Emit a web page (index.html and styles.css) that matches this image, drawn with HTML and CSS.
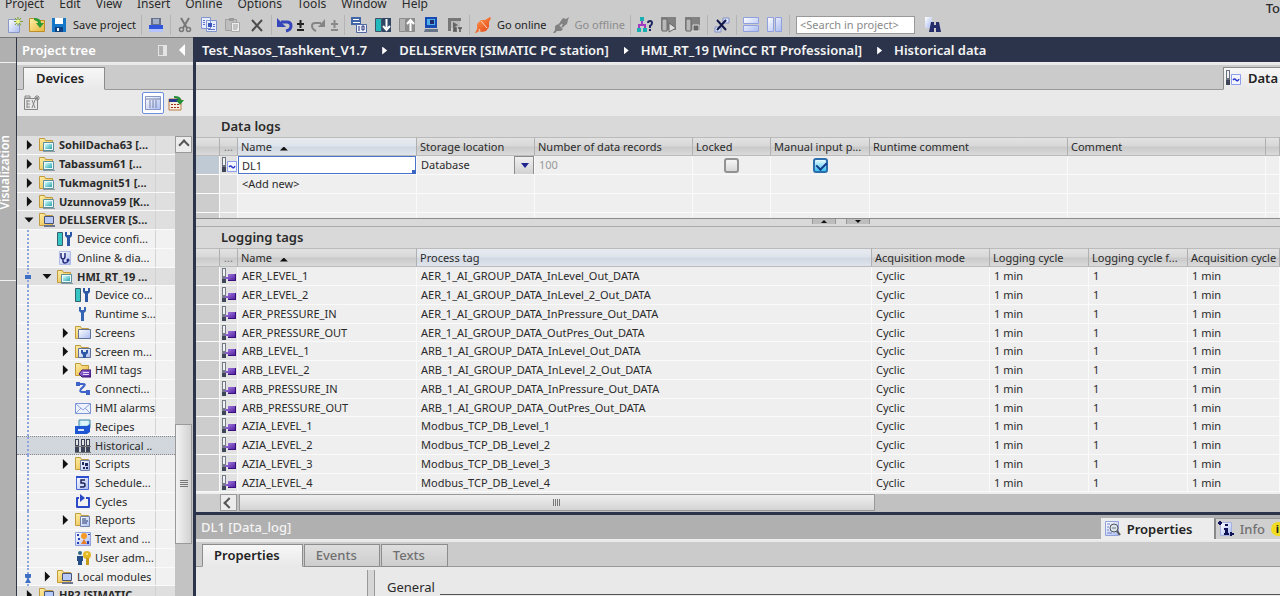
FILE: index.html
```
<!doctype html>
<html lang="en">
    <head>
        <meta charset="UTF-8" />
        <meta name="viewport" content="width=device-width, initial-scale=1.0" />
        <title>Historical data</title>
        <link rel="stylesheet" href="styles.css">
    </head>
    <body>
        <!-- icon sprite -->
        <svg class="sprite" aria-hidden="true">
            <defs>
                <linearGradient id="g-folder" x1="0" y1="0" x2="1" y2="1"><stop offset="0" stop-color="#fff0a8" /><stop offset="1" stop-color="#e8b53c" /></linearGradient>
                <linearGradient id="g-blue" x1="0" y1="0" x2="1" y2="1"><stop offset="0" stop-color="#fff" /><stop offset="1" stop-color="#a9baf0" /></linearGradient>
                <linearGradient id="g-teal" x1="0" y1="0" x2="1" y2="1"><stop offset="0" stop-color="#d4ffff" /><stop offset="1" stop-color="#2aa3ad" /></linearGradient>
                <linearGradient id="g-violet" x1="0" y1="0" x2="1" y2="1"><stop offset="0" stop-color="#a884e6" /><stop offset="1" stop-color="#4a1699" /></linearGradient>
                <linearGradient id="g-plug" x1="0" y1="0" x2="1" y2="1"><stop offset="0" stop-color="#ffa050" /><stop offset="1" stop-color="#e23d12" /></linearGradient>
            </defs>
            <symbol id="folder" viewBox="0 0 16 16"><path d="M.500 13.500v-12h5l1 2h7v10z" fill="url(#g-folder)" stroke="#c19a3d" /></symbol>
            <symbol id="station" viewBox="0 0 16 16"><use href="#folder" /><path d="M4.500 5.500h10v8h-10z" fill="#eef8f8" stroke="#5b8f9b" /><path d="M6 7h7v5H6z" fill="url(#g-teal)" /><path d="M4 14h12v1H4z" fill="#8b99a0" /></symbol>
            <symbol id="pc" viewBox="0 0 16 16"><use href="#folder" /><path d="M5.500 4.500h9v7h-9z" fill="#b6c8f5" stroke="#4a5578" /><path d="M5 13h11v2H5z" fill="#6c7690" /></symbol>
            <symbol id="config" viewBox="0 0 16 16"><path d="M.500 1.500h5v13h-5z" fill="#35c5c3" stroke="#35606e" /><path d="M8 1v4l2 2v8h3V7l2-2V1h-2v3h-3V1z" fill="#2c57a5" /></symbol>
            <symbol id="wrench" viewBox="0 0 16 16"><path d="M4 1v4l2 2v8h3V7l2-2V1H9v3H6V1z" fill="#3564b5" /></symbol>
            <symbol id="diag" viewBox="0 0 16 16"><path d="M2.500 1.500h11v13h-11z" fill="url(#g-blue)" stroke="#aebbe9" /><path d="M4 3v3q0 3 2 3t2-3V3M6 9v2q0 2 2 2t3-2" fill="none" stroke="#252a7c" stroke-width="1.500" /><circle cx="11" cy="10" r="1.500" fill="#252a7c" /></symbol>
            <symbol id="screens" viewBox="0 0 16 16"><use href="#folder" /><path d="M3.500 4.500h12v9h-12z" fill="url(#g-blue)" stroke="#607197" /></symbol>
            <symbol id="screenmgmt" viewBox="0 0 16 16"><use href="#screens" /><path d="M6 6v3l2 2v3h3v-3l2-2V6h-2v2H8V6z" fill="#2c57a5" /></symbol>
            <symbol id="tags" viewBox="0 0 16 16"><use href="#folder" /><path d="M4 12l3-4h9v7H7z" fill="url(#g-violet)" stroke="#3c1574" /><path d="M8 10.500h6M8 12.500h6" stroke="#e8dcff" /></symbol>
            <symbol id="connect" viewBox="0 0 16 16"><path d="M3 3h5q3 0 1 2L6 8q-2 3 1 3h5" fill="none" stroke="#3d63c9" stroke-width="2" /><path d="M1 1h4v4H1zM11 9h4v5h-4z" fill="#3d63c9" /></symbol>
            <symbol id="mail" viewBox="0 0 16 16"><path d="M.500 3.500h15v10H.500z" fill="#eef2ff" stroke="#7d94d6" /><path d="M1 4l7 6 7-6M1 13l5-5M15 13l-5-5" fill="none" stroke="#8ea3df" /></symbol>
            <symbol id="recipes" viewBox="0 0 16 16"><path d="M4 1h11v8H4z" fill="#bfe8f2" stroke="#3f86aa" /><path d="M6 3h7M6 5h7" stroke="#fff" /><path d="M0 7h12l3-2v8l-3 2H0z" fill="#1d55d2" /><path d="M3 10h6v2H3z" fill="#d5e3ff" /></symbol>
            <symbol id="history" viewBox="0 0 16 16"><path d="M0 1h4v13H0zM6 1h4v13H6zM11 1h4v13h-4z" fill="#3c4457" /><path d="M1 2h2v5H1zM7 2h2v5H7zM12 2h2v5h-2z" fill="#e4e4e4" /><path d="M0 14h16v1H0zM0 8h16v1H0z" fill="#777" /></symbol>
            <symbol id="scripts" viewBox="0 0 16 16"><use href="#folder" /><path d="M5.500 4.500h9v10h-9z" fill="url(#g-blue)" stroke="#7183ab" /><path d="M7 6h2v3H7zM10 7h3v3h-3zM8 11h2v2H8zM11 11h2v2h-2z" fill="#20295e" /></symbol>
            <symbol id="schedule" viewBox="0 0 16 16"><path d="M1.500 1.500h12v13h-12z" fill="url(#g-blue)" stroke="#4967d2" /><path d="M1 1h13v2H1z" fill="#2b51d1" /><path d="M10 5H6v3h2q2 0 2 2t-2 2H5" fill="none" stroke="#1c225c" stroke-width="1.500" /></symbol>
            <symbol id="cycles" viewBox="0 0 16 16"><path d="M4 4H2v9h12V4h-3" fill="none" stroke="#2b49c7" stroke-width="2" stroke-linejoin="round" /><path d="M5 0l5 4-5 4z" fill="#2b49c7" /></symbol>
            <symbol id="reports" viewBox="0 0 16 16"><use href="#folder" /><path d="M5.500 4.500h9v10h-9z" fill="url(#g-blue)" stroke="#7183ab" /><path d="M7 7h4M7 9h6M7 11h5" stroke="#24366e" /></symbol>
            <symbol id="texts" viewBox="0 0 16 16"><path d="M.500 1.500h15v13H.500z" fill="url(#g-blue)" stroke="#8fa0dc" /><path d="M2 3h2v2H2zM3 7h2v2H3zM2 11h2v2H2zM13 3h2v1h-2z" fill="#2440b5" /><circle cx="9" cy="5" r="3" fill="#f59b25" /><path d="M6 13l3-5 3 5z" fill="#e97b27" /><path d="M12 10h2v3h-2z" fill="#2440b5" /></symbol>
            <symbol id="users" viewBox="0 0 16 16"><circle cx="5" cy="3" r="2" fill="#2e6a87" /><path d="M2 6h6v5H7v4H3v-4H2z" fill="#244d87" /><circle cx="12" cy="5" r="4" fill="#e2b826" /><circle cx="12" cy="4" r="1" fill="#fff2a0" /><path d="M11 8h3v7h-3z" fill="#c79b18" /></symbol>
            <symbol id="taglog" viewBox="0 0 16 16"><path d="M1 0h4v15H1z" fill="#747a88" /><path d="M2 1h2v7H2z" fill="#f1f1f1" /><path d="M1 11h4v4H1z" fill="#3d4557" /><path d="M4 9h3V6h8v7H7v-2H4z" fill="url(#g-violet)" /><path d="M7 12.500h8M14.500 6v7" stroke="#37107c" /></symbol>
            <symbol id="datalog" viewBox="0 0 16 16"><path d="M1 0h4v15H1z" fill="#6a7180" /><path d="M2 1h2v7H2z" fill="#f1f1f1" /><path d="M1 10h4v5H1z" fill="#3d4557" /><path d="M6.500 4.500h9v10h-9z" fill="#f4f6ff" stroke="#8f9eea" /><path d="M8 10q1.500-2 3 0t3-1" fill="none" stroke="#2d3acb" stroke-width="1.500" /></symbol>
            <symbol id="new" viewBox="0 0 16 16"><path d="M1.500 2.500h11v13h-11z" fill="url(#g-blue)" stroke="#8998c9" /><path d="M11 0v9M7 4.500h9M8 1l6 7M14 1L8 8" stroke="#7da42a" /><circle cx="11" cy="4.500" r="2" fill="#eef58c" /></symbol>
            <symbol id="open" viewBox="0 0 16 16"><path d="M.500 14.500v-13h5l1 2h9v11z" fill="url(#g-folder)" stroke="#bd8d28" /><path d="M5 1q7 0 7 5h3l-4 5-4-5h2q0-2-4-3z" fill="#2b9a36" /></symbol>
            <symbol id="save" viewBox="0 0 16 16"><path d="M1 1h14v14H1z" fill="#1677c8" /><path d="M4 1h8v6H4z" fill="#fff" /><path d="M4 10h8v5H4z" fill="#0d3f81" /><path d="M6 11h2v3H6z" fill="#fff" /></symbol>
            <symbol id="print" viewBox="0 0 16 16"><path d="M3 1h10v8H3z" fill="#66718b" /><path d="M5 2h6v5H5z" fill="#a4afca" /><path d="M1 8h14v5H1z" fill="#3156dc" /><path d="M1 12h14v3H1z" fill="#b5c4ff" /></symbol>
            <symbol id="cut" viewBox="0 0 16 16"><path d="M4 1l6 10M12 1L6 11" stroke="#777" stroke-width="2" /><circle cx="4.500" cy="12.500" r="2" fill="none" stroke="#777" stroke-width="1.500" /><circle cx="11.500" cy="12.500" r="2" fill="none" stroke="#777" stroke-width="1.500" /></symbol>
            <symbol id="copy" viewBox="0 0 16 16"><path d="M.500 .500h9v11h-9zM5.500 3.500h10v11h-10z" fill="#e7ecff" stroke="#8194cf" /><path d="M2 3.500h2M2 5.500h2M2 7.500h2M12 7.500h2M12 9.500h2M7 12.500h7" stroke="#5a72c8" /><path d="M7 6h4v4H7z" fill="#3853b9" /></symbol>
            <symbol id="paste" viewBox="0 0 16 16"><path d="M.500 2.500h11v11h-11z" fill="#bebebe" stroke="#a0a0a0" /><path d="M4 1h5v3H4z" fill="#999" /><path d="M6.500 5.500h8v9h-8z" fill="#ededed" stroke="#aaa" /><path d="M8 8h5M8 10h5M8 12h4" stroke="#999" /></symbol>
            <symbol id="delete" viewBox="0 0 16 16"><path d="M3 3l10 11M13 3L3 14" stroke="#4b4b4b" stroke-width="2" /></symbol>
            <symbol id="undo" viewBox="0 0 28 16"><path d="M4 5h6q4 0 4 4t-5 5" fill="none" stroke="#3546ba" stroke-width="3" /><path d="M0 1v9h9z" fill="#3546ba" /><path d="M20 7h7M23.500 3v8M20 13h7" stroke="#222" stroke-width="2" /></symbol>
            <symbol id="redo" viewBox="0 0 28 16"><path d="M10 6H4Q1 6 1 9t4 5" fill="none" stroke="#858585" stroke-width="2" /><path d="M14 2v8H7z" fill="#858585" /><path d="M20 7h7M23.500 3v8M20 13h7" stroke="#888" stroke-width="2" /></symbol>
            <symbol id="compile" viewBox="0 0 16 16"><path d="M0 0h10v8H0z" fill="#4166a8" /><path d="M2 2.500h6M2 5.500h7" stroke="#fff" /><path d="M5.500 7.500h10v8h-10z" fill="#eef1ff" stroke="#5069a5" /><path d="M8 9v5M11 9h2v4h-2z" fill="none" stroke="#222c74" /></symbol>
            <symbol id="download" viewBox="0 0 16 16"><path d="M.500 1.500h6v13h-6z" fill="#22b9bc" stroke="#405265" /><path d="M7 1h9v14H7z" fill="#314664" /><path d="M11.500 2v9M8 9l3.500 4L15 9" fill="none" stroke="#fff" stroke-width="2" /></symbol>
            <symbol id="upload" viewBox="0 0 16 16"><path d="M.500 1.500h6v13h-6z" fill="#b4b4b4" stroke="#8b8b8b" /><path d="M7 1h9v14H7z" fill="#8d8d8d" /><path d="M11.500 14V5M8 7l3.500-4L15 7" fill="none" stroke="#fff" stroke-width="2" /></symbol>
            <symbol id="simulate" viewBox="0 0 16 16"><path d="M2 0h12v11H2z" fill="#174bb3" /><path d="M4 2h8v6H4z" fill="#4fb0ea" /><path d="M7 3h4v4H7z" fill="#202b6c" /><path d="M2 12h13v3H1z" fill="#67758a" /></symbol>
            <symbol id="runtime" viewBox="0 0 16 16"><path d="M1 1h13v3H4v10H1z" fill="#777" /><path d="M4 4h9v7H4z" fill="#bababa" /><path d="M6 5l5 3-5 3z" fill="#666" /><path d="M7 15v-4h2v2H7M9 13v2M11 11h4M13 11v4" fill="none" stroke="#555" stroke-width="1.500" /></symbol>
            <symbol id="plug" viewBox="0 0 16 16"><path d="M0 16l2-4V7l4-4h4l5-3 1 1-2 4v5l-3 4-4 1-3-1-3 2z" fill="url(#g-plug)" /><path d="M6 4l6 7M4 12l1 2" stroke="#ffd9c2" /></symbol>
            <symbol id="plug-off" viewBox="0 0 16 16"><path d="M0 16l2-3V9l3-2 5 5-2 2H4l-2 2zM7 5l3-4 3 1 3-2-1 3-1 4-3 2z" fill="#828282" /><path d="M6 8l3-3M9 10l2-2" stroke="#828282" stroke-width="2" /></symbol>
            <symbol id="nodes" viewBox="0 0 16 16"><path d="M3 0h4v4H3zM0 11h4v4H0zM6 11h4v4H6z" fill="#19afb2" /><path d="M5 4v4M2 11V8h6v3" fill="none" stroke="#a13bc0" stroke-width="2" /><path d="M11 6q0-2 2-2t2 2-2 3v2M13 12v2" fill="none" stroke="#202763" stroke-width="2" /></symbol>
            <symbol id="start" viewBox="0 0 16 16"><path d="M0 0h15v13H0z" fill="#818181" /><path d="M1 2h5v12H1z" fill="#b8b8b8" stroke="#686868" /><path d="M8 6l7 5-7 4z" fill="#ddd" stroke="#666" /></symbol>
            <symbol id="stop" viewBox="0 0 16 16"><path d="M0 0h15v13H0z" fill="#818181" /><path d="M1 2h5v12H1z" fill="#b8b8b8" stroke="#686868" /><path d="M8 8h6v6H8z" fill="#666" stroke="#ddd" /></symbol>
            <symbol id="crossref" viewBox="0 0 16 16"><path d="M9 1h6v5H9zM1 10h6v5H1z" fill="#dbe3ff" stroke="#8291c5" /><path d="M3 3l9 10M12 3L3 13" stroke="#111849" stroke-width="2" /></symbol>
            <symbol id="splith" viewBox="0 0 16 16"><path d="M.500 .500h15v6H.500zM.500 8.500h15v6H.500z" fill="url(#g-blue)" stroke="#90a0df" /></symbol>
            <symbol id="splitv" viewBox="0 0 16 16"><path d="M.500 .500h6v14h-6zM8.500 .500h6v14h-6z" fill="url(#g-blue)" stroke="#90a0df" /></symbol>
            <symbol id="find" viewBox="0 0 16 16"><path d="M0 0h7v11H0z" fill="url(#g-blue)" /><path d="M6 5h3v3h2V5h3l2 10h-5v-4H9v4H4z" fill="#242c6b" /></symbol>
            <symbol id="inspect" viewBox="0 0 16 16"><path d="M.500 .500h13v14H.500z" fill="url(#g-blue)" stroke="#91a2dc" /><path d="M2 3h3M2 6h2M2 9h2M2 12h5" stroke="#7186ca" /><circle cx="9" cy="7" r="4" fill="#dbe5ef" stroke="#555" /><path d="M12 10l3 4" stroke="#555" stroke-width="2" /><path d="M7 7h4" stroke="#777" /></symbol>
            <symbol id="info" viewBox="0 0 16 16"><path d="M2.500 1.500h11v13h-11z" fill="url(#g-blue)" stroke="#a5b1df" /><path d="M0 2h4M2 0v4M12 13h4M13 11v4" stroke="#101457" stroke-width="2" /><path d="M7 3h3v2H7zM6 7h4v5h1v2H6v-2h1V9H6z" fill="#101457" /></symbol>
            <symbol id="overview" viewBox="0 0 16 16"><path d="M.500 1.500h15v13H.500z" fill="url(#g-blue)" stroke="#8796c4" /><path d="M1 4h14M5 5v8M8 5v8M11 5v8" stroke="#7682a8" /></symbol>
            <symbol id="goto" viewBox="0 0 16 16"><path d="M1 4h12v11H1z" fill="#f5efe0" stroke="#bd7b45" /><path d="M1 4h9v3H1z" fill="#273b8d" /><path d="M3 9h2v1H3zM6 9h2v1H6zM9 9h2v1H9zM3 12h2v1H3zM6 12h2v1H6zM9 12h2v1H9z" fill="#a02e22" /><path d="M6 1q7 0 7 4h3l-4 5-4-5h2q0-2-4-2z" fill="#258d38" /></symbol>
            <symbol id="gridadd" viewBox="0 0 16 16"><path d="M.500 3.500h13v11h-13zM1 1h5v2H1zM3 6h3M3 9h3M3 12h3M3 5v8M8 5l3 8M11 5l-3 8" fill="none" stroke="#858585" /><path d="M13 0v6M10 3h6M11 1l4 4M15 1l-4 4" stroke="#858585" /></symbol>
        </svg>

        <header>
            <div class="menubar">
                <nav class="menu" aria-label="Menu">
                    <a href="#">Project</a>
                    <a href="#">Edit</a>
                    <a href="#">View</a>
                    <a href="#">Insert</a>
                    <a href="#">Online</a>
                    <a href="#">Options</a>
                    <a href="#">Tools</a>
                    <a href="#">Window</a>
                    <a href="#">Help</a>
                </nav>
                <span class="brand">To</span>
            </div>
            <div class="toolbar">
                <button class="tool tight" aria-label="New"><svg><use href="#new" /></svg></button>
                <button class="tool tight" aria-label="Open"><svg><use href="#open" /></svg></button>
                <button class="tool labelled"><svg><use href="#save" /></svg>Save project</button>
                <i class="sep"></i>
                <button class="tool" aria-label="Print"><svg><use href="#print" /></svg></button>
                <i class="sep"></i>
                <button class="tool" aria-label="Cut"><svg><use href="#cut" /></svg></button>
                <button class="tool" aria-label="Copy"><svg><use href="#copy" /></svg></button>
                <button class="tool" aria-label="Paste"><svg><use href="#paste" /></svg></button>
                <button class="tool" aria-label="Delete"><svg><use href="#delete" /></svg></button>
                <i class="sep"></i>
                <button class="tool wide" aria-label="Undo"><svg><use href="#undo" /></svg></button>
                <button class="tool wide" aria-label="Redo"><svg><use href="#redo" /></svg></button>
                <i class="sep"></i>
                <button class="tool" aria-label="Compile"><svg><use href="#compile" /></svg></button>
                <button class="tool" aria-label="Download"><svg><use href="#download" /></svg></button>
                <button class="tool" aria-label="Upload"><svg><use href="#upload" /></svg></button>
                <button class="tool" aria-label="Simulate"><svg><use href="#simulate" /></svg></button>
                <button class="tool" aria-label="Start runtime"><svg><use href="#runtime" /></svg></button>
                <i class="sep"></i>
                <button class="tool labelled"><svg><use href="#plug" /></svg>Go online</button>
                <button class="tool labelled offline"><svg><use href="#plug-off" /></svg>Go offline</button>
                <i class="sep"></i>
                <button class="tool" aria-label="Accessible devices"><svg><use href="#nodes" /></svg></button>
                <button class="tool" aria-label="Start CPU"><svg><use href="#start" /></svg></button>
                <button class="tool" aria-label="Stop CPU"><svg><use href="#stop" /></svg></button>
                <i class="sep"></i>
                <button class="tool" aria-label="Cross-references"><svg><use href="#crossref" /></svg></button>
                <i class="sep"></i>
                <button class="tool" aria-label="Split horizontally"><svg><use href="#splith" /></svg></button>
                <button class="tool" aria-label="Split vertically"><svg><use href="#splitv" /></svg></button>
                <i class="sep"></i>
                <input class="search" type="text" placeholder="&lt;Search in project&gt;" aria-label="Search in project" />
                <button class="tool" aria-label="Find"><svg><use href="#find" /></svg></button>
            </div>
        </header>

        <main class="workspace">
            <aside class="rail">
                <div class="rail-head"></div>
                <div class="rail-tab"><span>Visualization</span></div>
            </aside>

            <section class="project">
                <div class="pane-title">
                    <h2>Project tree</h2>
                    <i class="pin"></i>
                    <button class="collapse" aria-label="Collapse"></button>
                </div>
                <div class="tabs">
                    <button class="tab active">Devices</button>
                </div>
                <div class="subbar">
                    <button class="tool" aria-label="Add"><svg><use href="#gridadd" /></svg></button>
                    <button class="tool boxed" aria-label="Overview"><svg><use href="#overview" /></svg></button>
                    <button class="tool" aria-label="Go to"><svg><use href="#goto" /></svg></button>
                </div>
                <div class="tree-wrap">
                    <ul class="tree">
                        <li class="top"><i class="arrow"></i><svg><use href="#station" /></svg><span>SohilDacha63 [...</span></li>
                        <li class="top"><i class="arrow"></i><svg><use href="#station" /></svg><span>Tabassum61 [...</span></li>
                        <li class="top"><i class="arrow"></i><svg><use href="#station" /></svg><span>Tukmagnit51 [...</span></li>
                        <li class="top"><i class="arrow"></i><svg><use href="#station" /></svg><span>Uzunnova59 [K...</span></li>
                        <li class="top"><i class="arrow open"></i><svg><use href="#pc" /></svg><span>DELLSERVER [S...</span></li>
                        <li class="l1"><i class="arrow none"></i><svg><use href="#config" /></svg><span>Device confi...</span></li>
                        <li class="l1"><i class="arrow none"></i><svg><use href="#diag" /></svg><span>Online &amp; dia...</span></li>
                        <li class="l1 top mark"><i class="arrow open"></i><svg><use href="#station" /></svg><span>HMI_RT_19 ...</span></li>
                        <li class="l2"><i class="arrow none"></i><svg><use href="#config" /></svg><span>Device co...</span></li>
                        <li class="l2"><i class="arrow none"></i><svg><use href="#wrench" /></svg><span>Runtime s...</span></li>
                        <li class="l2"><i class="arrow"></i><svg><use href="#screens" /></svg><span>Screens</span></li>
                        <li class="l2"><i class="arrow"></i><svg><use href="#screenmgmt" /></svg><span>Screen m...</span></li>
                        <li class="l2"><i class="arrow"></i><svg><use href="#tags" /></svg><span>HMI tags</span></li>
                        <li class="l2"><i class="arrow none"></i><svg><use href="#connect" /></svg><span>Connecti...</span></li>
                        <li class="l2"><i class="arrow none"></i><svg><use href="#mail" /></svg><span>HMI alarms</span></li>
                        <li class="l2"><i class="arrow none"></i><svg><use href="#recipes" /></svg><span>Recipes</span></li>
                        <li class="l2 selected"><i class="arrow none"></i><svg><use href="#history" /></svg><span>Historical ..</span></li>
                        <li class="l2"><i class="arrow"></i><svg><use href="#scripts" /></svg><span>Scripts</span></li>
                        <li class="l2"><i class="arrow none"></i><svg><use href="#schedule" /></svg><span>Schedule...</span></li>
                        <li class="l2"><i class="arrow none"></i><svg><use href="#cycles" /></svg><span>Cycles</span></li>
                        <li class="l2"><i class="arrow"></i><svg><use href="#reports" /></svg><span>Reports</span></li>
                        <li class="l2"><i class="arrow none"></i><svg><use href="#texts" /></svg><span>Text and ...</span></li>
                        <li class="l2"><i class="arrow none"></i><svg><use href="#users" /></svg><span>User adm...</span></li>
                        <li class="l1 mark end"><i class="arrow"></i><svg><use href="#pc" /></svg><span>Local modules</span></li>
                        <li class="top"><i class="arrow"></i><svg><use href="#pc" /></svg><span>HP2 [SIMATIC</span></li>
                    </ul>
                    <div class="vscroll">
                        <button class="scroll-up" aria-label="Scroll up"></button>
                        <div class="vthumb"></div>
                    </div>
                </div>
            </section>

            <section class="editor">
                <nav class="crumbs" aria-label="Breadcrumb">
                    <a href="#">Test_Nasos_Tashkent_V1.7</a>
                    <a href="#">DELLSERVER [SIMATIC PC station]</a>
                    <a href="#">HMI_RT_19 [WinCC RT Professional]</a>
                    <a href="#">Historical data</a>
                </nav>
                <div class="tabs">
                    <button class="tab active view-tab"><svg><use href="#datalog" /></svg>Data</button>
                </div>
                <div class="subbar"></div>

                <h3>Data logs</h3>
                <div class="grid-pane logs">
                    <table>
                        <colgroup>
                            <col class="c-row"><col class="c-icon"><col class="c-name"><col class="c-mode"><col class="c-records"><col class="c-locked"><col class="c-cycle"><col class="c-comment"><col class="c-comment"><col>
                        </colgroup>
                        <thead>
                            <tr><th></th><th class="dots">...</th><th class="sorted">Name <i class="sort"></i></th><th>Storage location</th><th>Number of data records</th><th>Locked</th><th>Manual input p...</th><th>Runtime comment</th><th>Comment</th><th></th></tr>
                        </thead>
                        <tbody>
                            <tr class="current">
                                <td></td>
                                <td><svg><use href="#datalog" /></svg></td>
                                <td class="editing"><input type="text" value="DL1" aria-label="Name" /></td>
                                <td class="choice"><select aria-label="Storage location"><option>Database</option></select></td>
                                <td class="muted">100</td>
                                <td class="check"><input type="checkbox" aria-label="Locked" /></td>
                                <td class="check"><input type="checkbox" aria-label="Manual input" checked /></td>
                                <td></td><td></td><td></td>
                            </tr>
                            <tr><td></td><td></td><td>&lt;Add new&gt;</td><td></td><td></td><td></td><td></td><td></td><td></td><td></td></tr>
                            <tr><td></td><td></td><td></td><td></td><td></td><td></td><td></td><td></td><td></td><td></td></tr>
                            <tr><td></td><td></td><td></td><td></td><td></td><td></td><td></td><td></td><td></td><td></td></tr>
                        </tbody>
                    </table>
                </div>
                <div class="splitter">
                    <button class="up" aria-label="Expand lower pane"></button>
                    <button class="down" aria-label="Expand upper pane"></button>
                </div>

                <h3>Logging tags</h3>
                <div class="grid-pane tags">
                    <table>
                        <colgroup>
                            <col class="c-row"><col class="c-icon"><col class="c-name"><col class="c-process"><col class="c-mode"><col class="c-cycle"><col class="c-cycle"><col>
                        </colgroup>
                        <thead>
                            <tr><th></th><th class="dots">...</th><th>Name <i class="sort"></i></th><th class="sorted">Process tag</th><th>Acquisition mode</th><th>Logging cycle</th><th>Logging cycle f...</th><th>Acquisition cycle</th></tr>
                        </thead>
                        <tbody>
                            <tr><td></td><td><svg><use href="#taglog" /></svg></td><td>AER_LEVEL_1</td><td>AER_1_AI_GROUP_DATA_InLevel_Out_DATA</td><td>Cyclic</td><td>1 min</td><td>1</td><td>1 min</td></tr>
                            <tr><td></td><td><svg><use href="#taglog" /></svg></td><td>AER_LEVEL_2</td><td>AER_1_AI_GROUP_DATA_InLevel_2_Out_DATA</td><td>Cyclic</td><td>1 min</td><td>1</td><td>1 min</td></tr>
                            <tr><td></td><td><svg><use href="#taglog" /></svg></td><td>AER_PRESSURE_IN</td><td>AER_1_AI_GROUP_DATA_InPressure_Out_DATA</td><td>Cyclic</td><td>1 min</td><td>1</td><td>1 min</td></tr>
                            <tr><td></td><td><svg><use href="#taglog" /></svg></td><td>AER_PRESSURE_OUT</td><td>AER_1_AI_GROUP_DATA_OutPres_Out_DATA</td><td>Cyclic</td><td>1 min</td><td>1</td><td>1 min</td></tr>
                            <tr><td></td><td><svg><use href="#taglog" /></svg></td><td>ARB_LEVEL_1</td><td>ARB_1_AI_GROUP_DATA_InLevel_Out_DATA</td><td>Cyclic</td><td>1 min</td><td>1</td><td>1 min</td></tr>
                            <tr><td></td><td><svg><use href="#taglog" /></svg></td><td>ARB_LEVEL_2</td><td>ARB_1_AI_GROUP_DATA_InLevel_2_Out_DATA</td><td>Cyclic</td><td>1 min</td><td>1</td><td>1 min</td></tr>
                            <tr><td></td><td><svg><use href="#taglog" /></svg></td><td>ARB_PRESSURE_IN</td><td>ARB_1_AI_GROUP_DATA_InPressure_Out_DATA</td><td>Cyclic</td><td>1 min</td><td>1</td><td>1 min</td></tr>
                            <tr><td></td><td><svg><use href="#taglog" /></svg></td><td>ARB_PRESSURE_OUT</td><td>ARB_1_AI_GROUP_DATA_OutPres_Out_DATA</td><td>Cyclic</td><td>1 min</td><td>1</td><td>1 min</td></tr>
                            <tr><td></td><td><svg><use href="#taglog" /></svg></td><td>AZIA_LEVEL_1</td><td>Modbus_TCP_DB_Level_1</td><td>Cyclic</td><td>1 min</td><td>1</td><td>1 min</td></tr>
                            <tr><td></td><td><svg><use href="#taglog" /></svg></td><td>AZIA_LEVEL_2</td><td>Modbus_TCP_DB_Level_2</td><td>Cyclic</td><td>1 min</td><td>1</td><td>1 min</td></tr>
                            <tr><td></td><td><svg><use href="#taglog" /></svg></td><td>AZIA_LEVEL_3</td><td>Modbus_TCP_DB_Level_3</td><td>Cyclic</td><td>1 min</td><td>1</td><td>1 min</td></tr>
                            <tr><td></td><td><svg><use href="#taglog" /></svg></td><td>AZIA_LEVEL_4</td><td>Modbus_TCP_DB_Level_4</td><td>Cyclic</td><td>1 min</td><td>1</td><td>1 min</td></tr>
                        </tbody>
                    </table>
                </div>
                <div class="hscroll">
                    <button class="scroll-left" aria-label="Scroll left"></button>
                    <div class="hthumb"></div>
                </div>

                <div class="inspector">
                    <div class="inspector-title">
                        <h2>DL1 [Data_log]</h2>
                        <button class="itab active"><svg><use href="#inspect" /></svg>Properties</button>
                        <button class="itab"><svg><use href="#info" /></svg>Info <i class="badge">i</i></button>
                    </div>
                    <div class="tabs">
                        <button class="tab active">Properties</button>
                        <button class="tab">Events</button>
                        <button class="tab">Texts</button>
                    </div>
                    <div class="inspector-body">
                        <div class="nav-col"></div>
                        <fieldset>
                            <legend>General</legend>
                        </fieldset>
                    </div>
                </div>
            </section>
        </main>
    </body>
</html>
```
FILE: styles.css
```
* {
    box-sizing: border-box;
}

body {
    margin: 0;
    height: 100vh;
    display: flex;
    flex-direction: column;
    overflow: hidden;
    background: #cbcbcb;
    color: #2a2a2a;
    font-family: "Noto Sans", "Open Sans", sans-serif;
    font-size: 11px;
    line-height: 16px;
}

button,
input,
select {
    margin: 0;
    padding: 0;
    border: none;
    background: none;
    color: inherit;
    font: inherit;
}

a {
    color: inherit;
    text-decoration: none;
}

h2,
h3,
ul {
    margin: 0;
    padding: 0;
    font-size: 13px;
    font-weight: 600;
    list-style: none;
}

svg {
    width: 16px;
    height: 16px;
    flex: none;
    display: block;
}

.sprite {
    position: absolute;
    width: 0;
    height: 0;
}

/* menu and toolbar */
header {
    flex: none;
}

.menubar {
    height: 12px;
    display: flex;
    align-items: flex-end;
    justify-content: space-between;
}

.menu {
    display: flex;
    gap: 15px;
    padding-left: 5px;
    font-size: 12px;
}

.brand {
    align-self: flex-start;
    font-size: 13px;
    font-weight: 500;
}

.toolbar {
    height: 25px;
    display: flex;
    align-items: center;
    padding-left: 4px;
}

.tool {
    width: 24px;
    height: 20px;
    display: flex;
    flex: none;
    align-items: center;
    justify-content: center;
    white-space: nowrap;
}

.tool.tight {
    width: 22px;
}

.tool.wide {
    width: 34px;
}

.tool.wide svg {
    width: 28px;
}

.tool.labelled {
    width: auto;
    gap: 6px;
    padding: 0 3px;
    color: #222;
}

.tool.offline {
    color: #8c8c8c;
}

.sep {
    width: 1px;
    height: 20px;
    margin: 0 2px;
    background: #b4b4b4;
}

.search {
    width: 119px;
    height: 18px;
    margin: 0 6px 0 4px;
    padding: 0 3px;
    background: #fff;
    border: 1px solid #999;
}

.search::placeholder {
    color: #8a8a8a;
}

/* workspace */
.workspace {
    flex: 1;
    min-height: 0;
    display: flex;
}

.rail {
    width: 17px;
    flex: none;
    background: #b0b0b0;
    border-right: 1px solid #2f3544;
    border-top: 1px solid #777;
}

.rail-head {
    height: 25px;
    border-bottom: 1px solid #f0f0f0;
}

.rail-tab {
    height: 218px;
    display: flex;
    justify-content: center;
    border-bottom: 1px solid #f0f0f0;
    padding-right: 6px;
    padding-top: 72px;
    color: #fff;
    font-size: 12px;
    font-weight: 600;
    line-height: 12px;
}

.rail-tab span {
    writing-mode: vertical-rl;
    transform: rotate(180deg);
    align-self: flex-start;
}

.project {
    width: 179px;
    flex: none;
    display: flex;
    flex-direction: column;
    min-height: 0;
    border-right: 3px solid #2c344c;
    background: #c3c3c3;
}

.pane-title {
    height: 26px;
    flex: none;
    display: flex;
    align-items: center;
    padding: 0 8px 0 5px;
    background: #b0b0b0;
    border-top: 1px solid #777;
    border-bottom: 1px solid #eee;
    color: #fff;
}

.pane-title h2 {
    flex: 1;
}

.pin {
    width: 9px;
    height: 11px;
    margin-right: 12px;
    border: 1px solid #e4e4e4;
    border-right-width: 4px;
}

.collapse {
    width: 6px;
    height: 12px;
    background: #fff;
    clip-path: polygon(100% 0, 100% 100%, 0 50%);
}

.tabs {
    height: 27px;
    flex: none;
    display: flex;
    align-items: flex-end;
    gap: 1px;
    background: #cbcbcb;
    box-shadow: inset 0 -1px #999, inset 0 2px #e9e9e9;
    padding-left: 6px;
}

.tab {
    height: 23px;
    padding: 0 20px 2px 12px;
    background: linear-gradient(#dedede, #cdcdcd);
    border: 1px solid #8c8c8c;
    color: #707070;
    font-size: 13px;
    font-weight: 500;
    text-align: left;
}

.tab.active {
    background: linear-gradient(#f7f7f7, #e9e9e9);
    border-bottom-color: #e9e9e9;
    color: #222;
    font-weight: 600;
}

.view-tab {
    display: flex;
    align-items: center;
    gap: 7px;
    margin-left: auto;
    padding: 0 2px 1px 1px;
    border-right: none;
}

.subbar {
    height: 26px;
    flex: none;
    display: flex;
    align-items: center;
    padding: 0 5px 0 3px;
    background: #e9e9e9;
}

.subbar .boxed {
    width: 22px;
    height: 22px;
    margin-left: auto;
    background: #fff;
    border: 1px solid #6d8fe0;
    border-radius: 2px;
}

.tree-wrap {
    flex: 1;
    min-height: 0;
    display: flex;
    padding-top: 20px;
}

.tree {
    flex: 1;
    min-width: 0;
    overflow: hidden;
    font-size: 11px;
    font-weight: 400;
    background: linear-gradient(90deg, transparent 138px, #d4d4d4 138px, #d4d4d4 139px, transparent 139px) #f1f1f1;
}

.tree li {
    position: relative;
    height: 19px;
    display: flex;
    align-items: center;
    padding-left: 5px;
    border-bottom: 1px solid #fafafa;
    white-space: nowrap;
}

.tree li:nth-child(4n) {
    height: 18px;
}

.tree li.top {
    background: rgba(205, 205, 205, 0.5);
    font-weight: 700;
}

.tree li.l1 {
    padding-left: 23px;
}

.tree li.l2 {
    padding-left: 41px;
}

.tree li span {
    margin-left: 4px;
}

.tree li.selected {
    background: #d1d7dc;
    border: 1px dotted #888;
    border-width: 1px 0;
}

/* dotted guide beside the open station */
.tree .l1::before,
.tree .l2::before {
    content: "";
    position: absolute;
    top: 0;
    bottom: -1px;
    left: 10px;
    width: 2px;
    background: repeating-linear-gradient(#8ea4dc 0 2px, transparent 2px 4px);
}

.tree .mark::after {
    content: "";
    position: absolute;
    top: 7px;
    left: 8px;
    width: 6px;
    height: 4px;
    background: #3f6fc4;
}

.tree .end::after {
    top: 6px;
    height: 9px;
    clip-path: polygon(0 0, 100% 0, 100% 40%, 60% 50%, 100% 100%, 0 100%, 40% 50%, 0 40%);
}

.arrow {
    width: 14px;
    height: 14px;
    flex: none;
    margin-right: 3px;
    background: #111;
    clip-path: polygon(35% 15%, 72% 50%, 35% 85%);
}

.arrow.open {
    clip-path: polygon(18% 32%, 82% 32%, 50% 68%);
}

.arrow.none {
    background: none;
}

.vscroll {
    width: 18px;
    flex: none;
    display: flex;
    flex-direction: column;
    justify-content: space-between;
    padding-bottom: 52px;
}

.scroll-up,
.scroll-left {
    width: 17px;
    height: 17px;
    display: flex;
    align-items: center;
    justify-content: center;
    background: #ececec;
    border: 1px solid #999;
}

.scroll-up::before,
.scroll-left::before {
    content: "";
    width: 6px;
    height: 6px;
    border-top: 2px solid #555;
    border-left: 2px solid #555;
    transform: rotate(45deg);
}

.scroll-left::before {
    transform: rotate(-45deg);
}

.vthumb {
    width: 17px;
    height: 120px;
    display: flex;
    align-items: center;
    justify-content: center;
    background: linear-gradient(90deg, #f2f2f2, #d2d2d2);
    border: 1px solid #999;
}

.vthumb::before {
    content: "";
    width: 8px;
    height: 8px;
    background: repeating-linear-gradient(#777 0 1px, transparent 1px 2px);
}

/* editor */
.editor {
    flex: 1;
    min-width: 0;
    display: flex;
    flex-direction: column;
    background: #e9e9e9;
}

.crumbs {
    height: 26px;
    flex: none;
    display: flex;
    align-items: center;
    padding-left: 6px;
    background: #2c344c;
    border-bottom: 1px solid #eee;
    color: #f4f4f4;
    font-size: 13px;
    font-weight: 600;
    white-space: nowrap;
}

.crumbs a + a::before {
    content: "";
    display: inline-block;
    width: 5px;
    height: 8px;
    margin: 0 12px 0 15px;
    background: #fff;
    clip-path: polygon(0 0, 100% 50%, 0 100%);
}

.editor h3 {
    height: 21px;
    flex: none;
    padding: 2px 0 0 25px;
    background: #d9d9d9;
}

.grid-pane {
    flex: none;
    overflow: hidden;
    background: #efefef;
}

.logs {
    height: 81px;
}

.tags {
    height: 246px;
}

table {
    width: 100%;
    table-layout: fixed;
    border-collapse: separate;
    border-spacing: 0;
}

.c-row {
    width: 24px;
}

.c-icon {
    width: 18px;
}

.c-name {
    width: 179px;
}

.c-mode {
    width: 118px;
}

.c-records {
    width: 158px;
}

.c-locked {
    width: 78px;
}

.c-cycle {
    width: 99px;
}

.c-comment {
    width: 198px;
}

.c-process {
    width: 455px;
}

th,
td {
    height: 19px;
    padding: 0 4px;
    overflow: hidden;
    text-align: left;
    font-weight: 400;
    line-height: 16px;
    white-space: nowrap;
}

th {
    padding: 0 3px;
    background: linear-gradient(#e2e2e2, #d8d8d8 45%, #cacaca 55%, #dadada);
    border-top: 1px solid #bbb;
    border-right: 1px solid #b0b0b0;
    border-bottom: 1px solid #bbb;
}

th.sorted {
    background: linear-gradient(#e7ebf0, #dfe4ec 45%, #d2d8e2 55%, #dfe4ec);
}

td {
    background: #efefef;
    border-right: 1px solid #fafafa;
    border-bottom: 1px solid #fafafa;
}

tbody tr:nth-child(4n) td {
    height: 18px;
}

td:first-child {
    background: #cdcdcd;
}

td:nth-child(2) {
    padding: 0 1px;
    background: #e2e2e2;
}

th.dots {
    padding: 0 4px;
    color: #777;
}

.sort {
    display: inline-block;
    width: 8px;
    height: 4px;
    margin-left: 5px;
    background: #111;
    clip-path: polygon(50% 0, 100% 100%, 0 100%);
}

.current td:first-child {
    background: #c0cad4;
}

td.editing {
    position: relative;
    padding: 0;
}

.editing input {
    display: block;
    width: 100%;
    height: 18px;
    padding: 0 3px;
    background: #fff;
    border: 1px solid #4a74cc;
}

.editing::after {
    content: "";
    position: absolute;
    right: 0;
    bottom: 0;
    width: 4px;
    height: 4px;
    background: #3a67c4;
}

td.choice {
    position: relative;
    padding: 0;
}

.choice select {
    display: block;
    width: 100%;
    height: 18px;
    padding-left: 4px;
    appearance: none;
}

.choice::before {
    content: "";
    position: absolute;
    top: 0;
    right: 0;
    width: 18px;
    height: 18px;
    background: linear-gradient(#f0f0f0, #cfcfcf);
    border: 1px solid #8c8c8c;
    pointer-events: none;
}

.choice::after {
    content: "";
    position: absolute;
    top: 7px;
    right: 5px;
    width: 8px;
    height: 5px;
    background: #1e2390;
    clip-path: polygon(0 0, 100% 0, 50% 100%);
    pointer-events: none;
}

.muted {
    color: #999;
}

.check input {
    display: block;
    position: relative;
    width: 15px;
    height: 15px;
    margin: 0 auto;
    appearance: none;
    background: linear-gradient(#f6f6f6, #d8d8d8);
    border: 2px solid #929292;
    border-radius: 3px;
}

.check input:checked {
    background: linear-gradient(#e8faff, #3cc3ee);
    border-color: #2d6fae;
}

.check input:checked::before {
    content: "";
    position: absolute;
    top: 0;
    left: 3px;
    width: 5px;
    height: 8px;
    border: solid #143c8c;
    border-width: 0 2px 2px 0;
    transform: rotate(45deg);
}

.splitter {
    height: 9px;
    flex: none;
    display: flex;
    justify-content: center;
    gap: 10px;
    padding-left: 206px;
    background: #d9d9d9;
    border-top: 1px solid #8c8c8c;
    border-bottom: 1px solid #aaa;
}

.splitter button {
    width: 24px;
    height: 5px;
    display: flex;
    align-items: center;
    justify-content: center;
    background: #bdbdbd;
    border: 1px solid #999;
    border-width: 0 1px;
}

.splitter button::before {
    content: "";
    width: 6px;
    height: 3px;
    background: #111;
    clip-path: polygon(50% 0, 100% 100%, 0 100%);
}

.splitter .down::before {
    clip-path: polygon(0 0, 100% 0, 50% 100%);
}

.hscroll {
    height: 18px;
    flex: none;
    display: flex;
    gap: 2px;
    padding-left: 24px;
    background: linear-gradient(90deg, #cdcdcd 24px, #c1c1c1 24px);
}

.hthumb {
    width: 60%;
    height: 17px;
    display: flex;
    align-items: center;
    justify-content: center;
    background: linear-gradient(#efefef, #d4d4d4);
    border: 1px solid #999;
}

.hthumb::before {
    content: "";
    width: 8px;
    height: 7px;
    background: repeating-linear-gradient(90deg, #777 0 1px, transparent 1px 2px);
}

/* inspector */
.inspector {
    flex: 1;
    min-height: 0;
    display: flex;
    flex-direction: column;
    border-top: 3px solid #2c344c;
}

.inspector-title {
    height: 25px;
    flex: none;
    display: flex;
    align-items: flex-end;
    padding-left: 5px;
    overflow: hidden;
    background: #b0b0b0;
    border-bottom: 1px solid #eee;
    color: #f4f4f4;
}

.inspector-title h2 {
    flex: 1;
    align-self: center;
    font-weight: 500;
}

.itab {
    height: 21px;
    display: flex;
    align-items: center;
    gap: 6px;
    padding: 0 0 0 2px;
    background: #d0d0d0;
    border-left: 2px solid #888;
    border-top: 1px solid #999;
    color: #707070;
    font-size: 13px;
    font-weight: 500;
}

.itab.active {
    width: 113px;
    background: #ececec;
    border-color: #ececec;
    color: #222;
    font-weight: 600;
}

.badge {
    width: 9px;
    height: 14px;
    padding-left: 4px;
    background: #f1dc1f;
    border-radius: 7px 0 0 7px;
    color: #222;
    font-size: 11px;
    font-style: normal;
    font-weight: 700;
    line-height: 14px;
}

.inspector .tab {
    padding: 0 22px 2px 11px;
}

.inspector-body {
    flex: 1;
    min-height: 0;
    display: flex;
    overflow: hidden;
    padding-top: 3px;
}

.nav-col {
    width: 179px;
    flex: none;
    background: linear-gradient(90deg, transparent 171px, #999 171px, #999 172px, #d6d6d6 172px, #d6d6d6 178px, #999 178px);
}

fieldset {
    flex: 1;
    margin: 0 0 0 12px;
    padding: 0;
    border: none;
}

legend {
    width: 100%;
    display: flex;
    gap: 5px;
    padding: 9px 0 0;
    font-size: 13px;
}

legend::after {
    content: "";
    flex: 1;
    height: 15px;
    border-bottom: 1px solid #555;
}
```
